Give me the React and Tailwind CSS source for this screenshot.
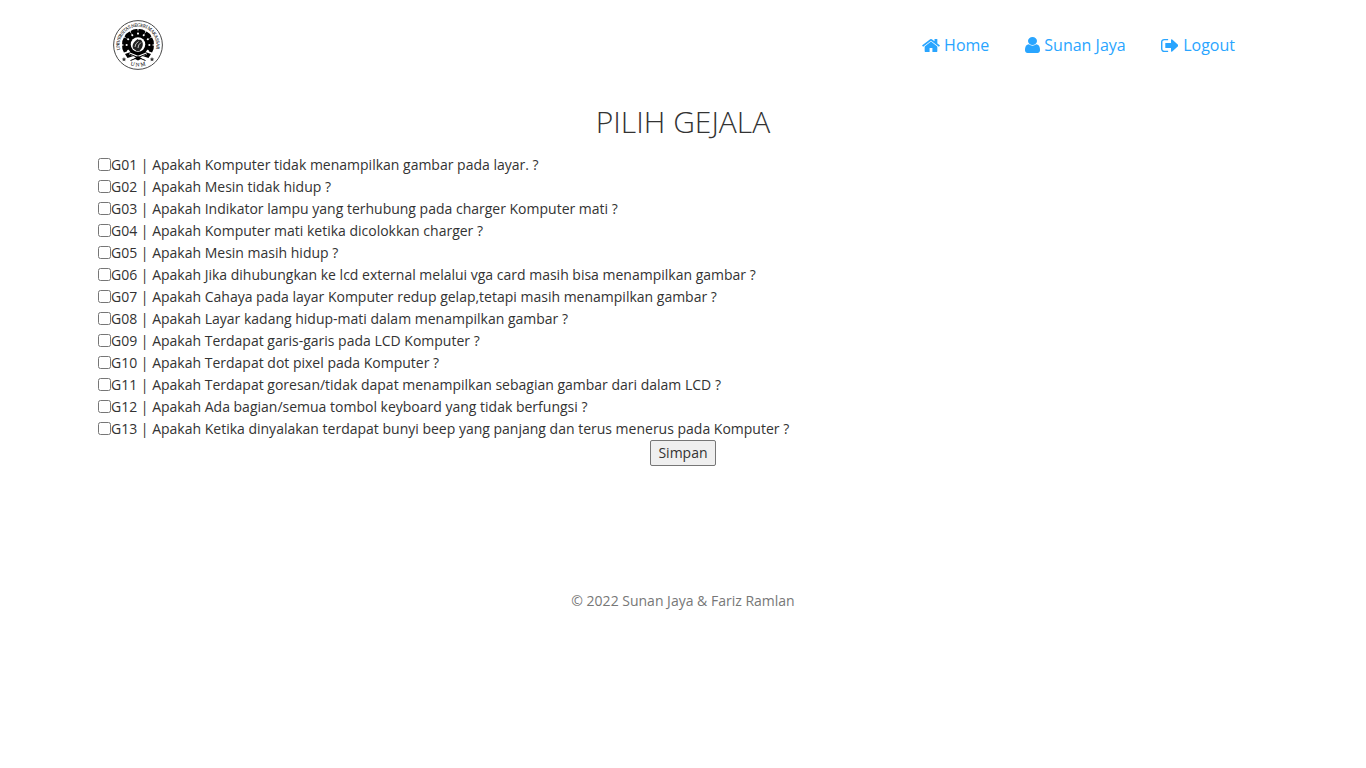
const symptoms = [
  "Komputer tidak menampilkan gambar pada layar.",
  "Mesin tidak hidup",
  "Indikator lampu yang terhubung pada charger Komputer mati",
  "Komputer mati ketika dicolokkan charger",
  "Mesin masih hidup",
  "Jika dihubungkan ke lcd external melalui vga card masih bisa menampilkan gambar",
  "Cahaya pada layar Komputer redup gelap,tetapi masih menampilkan gambar",
  "Layar kadang hidup-mati dalam menampilkan gambar",
  "Terdapat garis-garis pada LCD Komputer",
  "Terdapat dot pixel pada Komputer",
  "Terdapat goresan/tidak dapat menampilkan sebagian gambar dari dalam LCD",
  "Ada bagian/semua tombol keyboard yang tidak berfungsi",
  "Ketika dinyalakan terdapat bunyi beep yang panjang dan terus menerus pada Komputer",
];

function Logo() {
  const petals = [-105, -75, -45, -15, 15, 45, 75, 105];
  return (
    <svg viewBox="0 0 100 100" className="h-[50px] w-[50px]">
      <defs>
        <path id="arc-top" d="M15.200 62A36.800 36.800 0 1 1 84.800 62" />
        <path id="arc-bottom" d="M24 84.500A43.500 43.500 0 0 0 76 84.500" />
      </defs>
      <circle cx="50" cy="50" r="48.800" fill="#fff" stroke="#333" strokeWidth="1.800" />
      <g fontSize="9.500" fontFamily="Liberation Serif, serif" fill="#222" stroke="#222" strokeWidth="0.150">
        <text><textPath href="#arc-top" startOffset="2" textLength="134">UNIVERSITAS NEGERI MAKASSAR</textPath></text>
        <text fontSize="11"><textPath href="#arc-bottom" startOffset="50%" textAnchor="middle">U N M</textPath></text>
      </g>
      {petals.map((a) => (
        <path key={a} d="M46 34V27L43 25V19Q50 16.500 57 19V25L54 27V34Z" fill="#000" transform={`rotate(${a} 50 50)`} />
      ))}
      <circle cx="50" cy="50" r="21" fill="#000" />
      <circle cx="50" cy="49" r="14.500" fill="#fff" />
      <path d="M40 57C37 47 44 43 49 38C51 41 55 38 57 41C61 46 60 53 57 57L53 62H47Z" fill="#222" />
      <path d="M44 54Q44 47 51 43M50 56Q50 49 56 45" fill="none" stroke="#ccc" strokeWidth="1.800" />
      <path d="M24 68L38 63L50 67L62 63L76 68L71 76L59 72L50 76L41 72L29 76Z" fill="#000" />
      <path d="M33 67L65 80M67 67L35 80" stroke="#fff" strokeWidth="4.500" />
      <path d="M33 68L65 81M67 68L35 81" stroke="#000" strokeWidth="2" />
      <path d="M42 77L50 72L58 77L50 81Z" fill="#000" />
      <path id="star" d="M22 74L23.300 77L26.500 77.300L24 79.500L24.800 82.500L22 81L19.200 82.500L20 79.500L17.500 77.300L20.700 77Z" fill="#333" />
      <use href="#star" x="56" />
    </svg>
  );
}

function HomeIcon() {
  return (
    <svg viewBox="13 253 1638 1283" preserveAspectRatio="none" fill="currentColor" className="h-[13px] w-[18px]">
      <path d="M1408 992v480q0 26-19 45t-45 19h-384v-384h-256v384h-384q-26 0-45-19t-19-45v-480q0-1 .5-3t.5-3l575-474 575 474q1 2 1 6zm223-69l-62 74q-8 9-21 11h-3q-13 0-21-7l-692-577-692 577q-12 8-24 7-13-2-21-11l-62-74q-8-10-7-23.500t11-21.500l719-599q32-26 76-26t76 26l244 204v-195q0-14 9-23t23-9h192q14 0 23 9t9 23v408l219 182q10 8 11 21.500t-7 23.500z" />
    </svg>
  );
}

function UserIcon() {
  return (
    <svg viewBox="256 128 1280 1536" preserveAspectRatio="none" fill="currentColor" className="h-4 w-[15px]">
      <path d="M1536 1399q0 109-62.500 187t-150.500 78h-854q-88 0-150.500-78t-62.500-187q0-85 8.500-160.500t31.500-152 58.500-131 94-89 134.500-34.500q131 128 313 128t313-128q76 0 134.500 34.500t94 89 58.500 131 31.500 152 8.500 160.500zm-256-887q0 159-112.500 271.500t-271.500 112.500-271.500-112.500-112.500-271.500 112.500-271.500 271.500-112.500 271.500 112.500 112.500 271.500z" />
    </svg>
  );
}

function LogoutIcon() {
  return (
    <svg viewBox="64 256 1568 1280" preserveAspectRatio="none" fill="currentColor" className="-ml-px h-[13px] w-[17.5px] mr-px">
      <path d="M704 1440q0 4 1 20t.5 26.500-3 23.500-10 19.500-20.500 6.500h-320q-119 0-203.500-84.500t-84.500-203.500v-704q0-119 84.500-203.500t203.500-84.500h320q13 0 22.500 9.500t9.500 22.500q0 4 1 20t.5 26.500-3 23.500-10 19.500-20.500 6.500h-320q-66 0-113 47t-47 113v704q0 66 47 113t113 47h312l11.500 1 11.500 3 8 5.500 7 9 2 13.500zm928-544q0 26-19 45l-544 544q-19 19-45 19t-45-19-19-45v-288h-448q-26 0-45-19t-19-45v-384q0-26 19-45t45-19h448v-288q0-26 19-45t45-19 45 19l544 544q19 19 19 45z" />
    </svg>
  );
}

export default function App() {
  return (
    <div className="min-h-screen bg-white font-['Open_Sans',sans-serif] text-sm leading-[22px] text-[#333]">
      <header className="mx-auto flex h-[90px] w-[1170px] items-center justify-between px-[15px]">
        <Logo />
        <nav className="flex items-center gap-9 pr-[18px] text-base text-[#29a5ff]">
          <a className="flex items-center gap-1"><HomeIcon />Home</a>
          <a className="flex items-center gap-1"><UserIcon />Sunan Jaya</a>
          <a className="flex items-center gap-1"><LogoutIcon />Logout</a>
        </nav>
      </header>
      <main className="mx-auto w-[1170px]">
        <h1 className="pt-[15px] text-center text-[30px] font-light leading-[33px]">PILIH GEJALA</h1>
        <form className="pt-4">
          {symptoms.map((s, i) => (
            <label key={s} className="flex h-[22px] items-start">
              <input type="checkbox" className="m-0 mt-1 h-[13px] w-[13px]" />
              <span className="whitespace-pre">{`G${String(i + 1).padStart(2, "0")} | Apakah ${s} ?`}</span>
            </label>
          ))}
          <div className="flex justify-center">
            <button type="button" className="h-[26px] w-[66px] rounded-[2px] border border-[#767676] bg-[#efefef]">Simpan</button>
          </div>
        </form>
      </main>
      <footer className="pt-[124px] text-center text-[#777]">© 2022 Sunan Jaya &amp; Fariz Ramlan</footer>
    </div>
  );
}
